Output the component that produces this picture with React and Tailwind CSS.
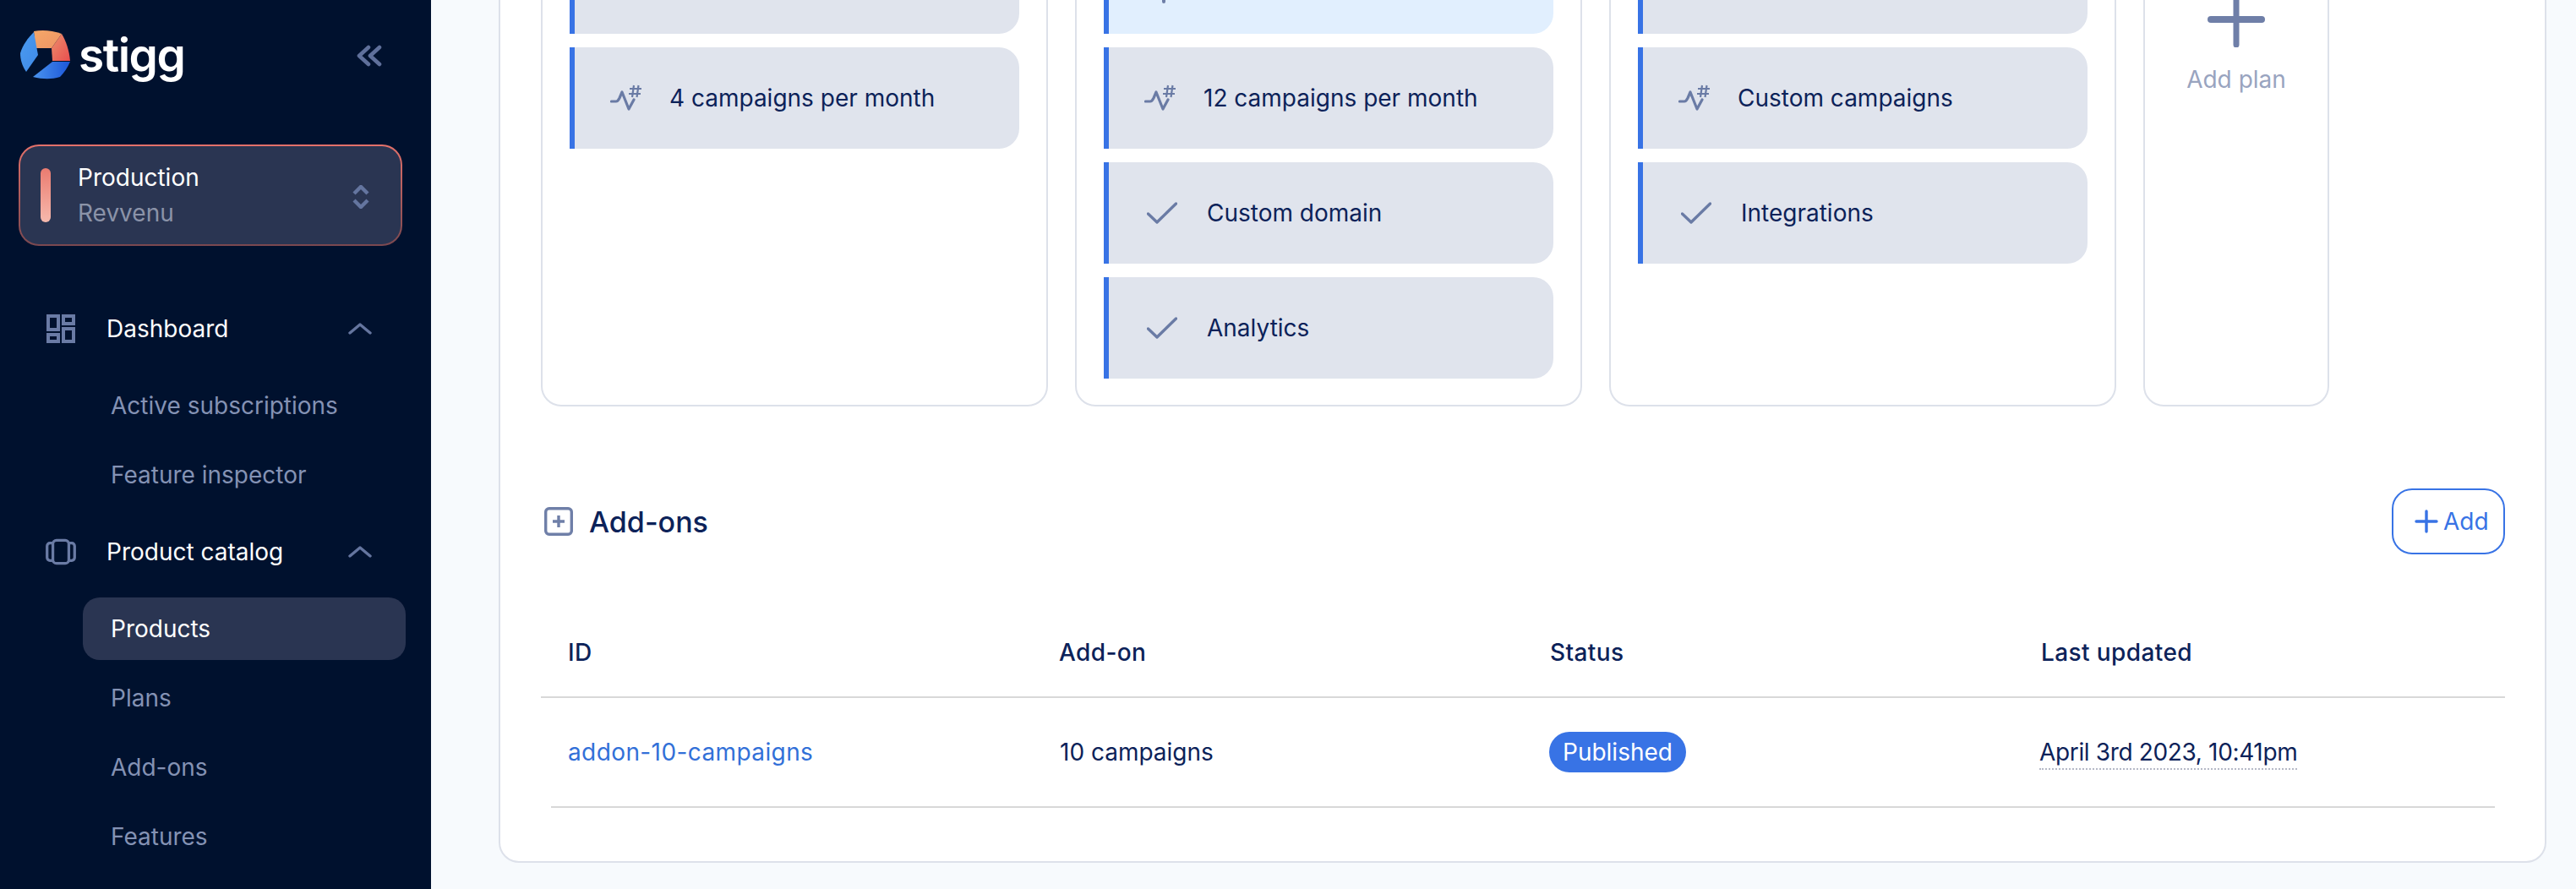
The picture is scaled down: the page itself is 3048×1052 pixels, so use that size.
import React from "react";

const FONT = "[font-family:'Inter','Liberation_Sans',sans-serif]";

function Logo() {
  return (
    <svg width="60" height="60" viewBox="0 0 60 60" className="shrink-0">
      <defs>
        <linearGradient id="lgA" x1="0" y1="0" x2="1" y2="1"><stop offset="0" stopColor="#f4a768" /><stop offset="1" stopColor="#ee9465" /></linearGradient>
        <linearGradient id="lgB" x1="0" y1="0" x2="1" y2="1"><stop offset="0" stopColor="#ec8e6c" /><stop offset="1" stopColor="#e94f4f" /></linearGradient>
        <linearGradient id="lgC" x1="0" y1="0" x2="1" y2="1"><stop offset="0" stopColor="#4b9bef" /><stop offset="1" stopColor="#3f8ae8" /></linearGradient>
        <linearGradient id="lgD" x1="0" y1="0" x2="1" y2="0"><stop offset="0" stopColor="#4a94ee" /><stop offset="1" stopColor="#1c56d8" /></linearGradient>
      </defs>
      <path d="M16 1 C26 -1 38 0 49 4 L37 21 H18 Z" fill="url(#lgA)" />
      <path d="M49 4 C54 12 58 24 59 36 L38 36 L37 21 Z" fill="url(#lgB)" />
      <path d="M16 2 L21 29 L7 49 C2 42 0 34 0 27 C3 17 9 9 16 2 Z" fill="url(#lgC)" />
      <path d="M38 37 H59 C56 44 52 50 47 55 C37 58 27 58 15 55 Z" fill="url(#lgD)" />
    </svg>
  );
}

function SidebarIcon({ name }) {
  if (name === "dash")
    return (
      <svg width="34" height="34" viewBox="0 0 34 34" fill="none" stroke="#6a7ba5" strokeWidth="4">
        <rect x="2" y="2" width="12" height="16" />
        <rect x="20" y="2" width="12" height="9" />
        <rect x="2" y="24" width="12" height="8" />
        <rect x="20" y="17" width="12" height="15" />
      </svg>
    );
  return (
    <svg width="42" height="36" viewBox="0 0 42 36" fill="none" stroke="#6a7ba5" strokeWidth="3.8">
      <rect x="10" y="2" width="22" height="32" rx="5" />
      <path d="M10 6H6a4 4 0 0 0-4 4v16a4 4 0 0 0 4 4h4M32 6h4a4 4 0 0 1 4 4v16a4 4 0 0 1-4 4h-4" />
    </svg>
  );
}

function Chevron() {
  return (
    <svg width="28" height="18" viewBox="0 0 28 18" fill="none" stroke="#64759f" strokeWidth="3.4" strokeLinecap="round" strokeLinejoin="round">
      <path d="M2 14 L14 4 L26 14" />
    </svg>
  );
}

function NavHead({ icon, label }) {
  return (
    <div className="flex items-center h-[74px] my-[9px] pl-[54px] pr-[70px]">
      <div className="w-[36px] flex justify-center"><SidebarIcon name={icon} /></div>
      <span className="ml-[36px] flex-1 text-[28px] text-white">{label}</span>
      <Chevron />
    </div>
  );
}

function NavSub({ label, active }) {
  return (
    <div className={`flex items-center h-[74px] ml-[98px] mr-[30px] pl-[33px] rounded-[20px] text-[28px] ${active ? "bg-[#2a3552] text-white" : "text-[#8492b4]"}`}>
      {label}
    </div>
  );
}

function Sidebar() {
  return (
    <aside className="w-[510px] shrink-0 h-full bg-[#00112e] overflow-hidden">
      <div className="flex items-center h-[68px] mt-[32px] pl-[24px] pr-[58px]">
        <Logo />
        <span className="ml-[9px] text-[55px] leading-none font-semibold text-white tracking-[-1.5px] flex-1 -mt-[2px]">stigg</span>
        <svg width="30" height="26" viewBox="0 0 30 26" fill="none" stroke="#5f709b" strokeWidth="4.6" strokeLinecap="round" strokeLinejoin="round">
          <path d="M14 3 L3 13 L14 23 M27 3 L16 13 L27 23" />
        </svg>
      </div>
      <div className="mt-[71px] ml-[22px] mr-[34px] h-[120px] rounded-[24px] border-2 border-transparent [background:linear-gradient(#2a3552,#2a3552)_padding-box,linear-gradient(180deg,#e4716a,#7a4850)_border-box] flex items-center pl-[24px] pr-[37px]">
        <div className="w-[12px] h-[64px] rounded-full bg-gradient-to-b from-[#ea7b70] to-[#f5b9ad]" />
        <div className="ml-[32px] flex-1 flex flex-col">
          <span className="text-[28px] leading-[42px] text-white">Production</span>
          <span className="text-[28px] leading-[42px] text-[#8b93a8]">Revvenu</span>
        </div>
        <svg width="20" height="28" viewBox="0 0 20 28" fill="none" stroke="#64759f" strokeWidth="4.4" className="mt-[3px]">
          <path d="M2 10 L10 2 L18 10 M2 18 L10 26 L18 18" />
        </svg>
      </div>
      <div className="mt-[52px] flex flex-col gap-[8px]">
        <NavHead icon="dash" label="Dashboard" />
        <NavSub label="Active subscriptions" />
        <NavSub label="Feature inspector" />
        <NavHead icon="box" label="Product catalog" />
        <NavSub label="Products" active />
        <NavSub label="Plans" />
        <NavSub label="Add-ons" />
        <NavSub label="Features" />
      </div>
    </aside>
  );
}

function MeterIcon() {
  return (
    <svg width="38" height="32" viewBox="0 0 38 32" fill="none" stroke="#6a7ba5" className="shrink-0">
      <path d="M1.5 20 H7 C9 20 10 18 11 16 L14 9 L22 29 L28 18" strokeWidth="3.2" strokeLinecap="round" strokeLinejoin="round" />
      <path d="M28 1 L26 15 M33.5 1 L31.5 15 M23 5 H37 M22 11 H36" strokeWidth="2.2" />
    </svg>
  );
}

function CheckIcon() {
  return (
    <svg width="36" height="26" viewBox="0 0 36 26" fill="none" stroke="#6a7ba5" strokeWidth="3.4" strokeLinecap="round" strokeLinejoin="round" className="shrink-0 ml-[3px]">
      <path d="M1.5 14 L12 24 L34.5 2" />
    </svg>
  );
}

function StubIcon() {
  return (
    <svg width="38" height="48" viewBox="0 0 38 48" fill="none" stroke="#6f7fa8" strokeWidth="4" strokeLinecap="round" className="shrink-0">
      <path d="M23 10 V46" />
    </svg>
  );
}

function Feature({ kind, label, light }) {
  return (
    <div className={`h-[120px] shrink-0 flex items-center border-l-[6px] border-[#3873e5] rounded-r-[24px] pl-[42px] ${light ? "bg-[#e1effe]" : "bg-[#e0e4ed]"}`}>
      {kind === "meter" && <MeterIcon />}
      {kind === "check" && <CheckIcon />}
      {kind === "stub" && <StubIcon />}
      {label && <span className={`${kind === "meter" ? "ml-[32px]" : "ml-[35px]"} text-[28px] text-[#0c2259]`}>{label}</span>}
    </div>
  );
}

function Plan({ children }) {
  return (
    <div className="w-[600px] shrink-0 border-2 border-[#dde1ea] rounded-[24px] px-[32px] pt-[38px] flex flex-col gap-[16px]">
      {children}
    </div>
  );
}

export default function App() {
  return (
    <div className={`w-[3048px] h-[1052px] flex overflow-hidden bg-[#f7fafd] ${FONT}`}>
      <Sidebar />
      <main className="flex-1 overflow-hidden pl-[80px] pr-[35px]">
        <div className="h-[1221px] -mt-[200px] border-2 border-[#dde1ea] rounded-[24px] bg-white flex flex-col">
          <div className="h-[601px] mt-[78px] flex gap-[32px] pl-[48px] shrink-0">
            <Plan>
              <Feature />
              <Feature kind="meter" label="4 campaigns per month" />
            </Plan>
            <Plan>
              <Feature kind="stub" light />
              <Feature kind="meter" label="12 campaigns per month" />
              <Feature kind="check" label="Custom domain" />
              <Feature kind="check" label="Analytics" />
            </Plan>
            <Plan>
              <Feature />
              <Feature kind="meter" label="Custom campaigns" />
              <Feature kind="check" label="Integrations" />
            </Plan>
            <div className="w-[220px] shrink-0 border-2 border-[#dde1ea] rounded-[24px] flex flex-col items-center pt-[94px]">
              <svg width="68" height="80" viewBox="0 0 68 80" fill="none" stroke="#6f7fa8" strokeLinecap="round" className="shrink-0">
                <path d="M34 0 V77" strokeWidth="7" />
                <path d="M4 47 H64" strokeWidth="8" />
              </svg>
              <span className="mt-[17px] text-[28px] leading-[42px] text-[#99a4bf]">Add plan</span>
            </div>
          </div>
          <div className="flex items-center justify-between h-[78px] mt-[97px] pl-[52px] pr-[47px] shrink-0">
            <div className="flex items-center">
              <svg width="34" height="34" viewBox="0 0 34 34" fill="none" stroke="#6f7fa8" strokeWidth="3.4">
                <rect x="1.7" y="1.7" width="30.6" height="30.6" rx="4" />
                <path d="M17 10 V24 M10 17 H24" />
              </svg>
              <span className="ml-[19px] text-[34px] font-medium text-[#0c2259]">Add-ons</span>
            </div>
            <div className="h-[78px] w-[134px] border-2 border-[#3873e5] rounded-[24px] flex items-center pl-[25px] text-[#3873e5]">
              <svg width="28" height="28" viewBox="0 0 28 28" fill="none" stroke="#3873e5" strokeWidth="3.4" strokeLinecap="round">
                <path d="M14 2 V26 M2 14 H26" />
              </svg>
              <span className="ml-[6px] text-[28px]">Add</span>
            </div>
          </div>
          <div className="mt-[74px] ml-[48px] mr-[47px]">
            <div className="grid grid-cols-4 h-[96px] pb-[10px] items-center border-b-2 border-[#d8d8d8] text-[28px] font-medium tracking-[0.4px] text-[#0c2259]">
              <div className="pl-[32px]">ID</div>
              <div className="pl-[32px]">Add-on</div>
              <div className="pl-[32px]">Status</div>
              <div className="pl-[32px]">Last updated</div>
            </div>
            <div className="mx-[12px] grid grid-cols-4 h-[130px] items-center border-b-2 border-[#d8d8d8] text-[28px] text-[#0c2259]">
              <div className="pl-[20px] text-[#3270d8] tracking-[0.4px]">addon-10-campaigns</div>
              <div className="pl-[27px]">10 campaigns</div>
              <div className="pl-[31px]">
                <span className="inline-flex items-center h-[48px] px-[16px] rounded-full bg-[#3873e5] text-white">Published</span>
              </div>
              <div className="pl-[36px]">
                <span className="border-b-2 border-dotted border-[#b5b9c6] pb-[2px] tracking-[-0.35px]">April 3rd 2023, 10:41pm</span>
              </div>
            </div>
          </div>
        </div>
      </main>
    </div>
  );
}
